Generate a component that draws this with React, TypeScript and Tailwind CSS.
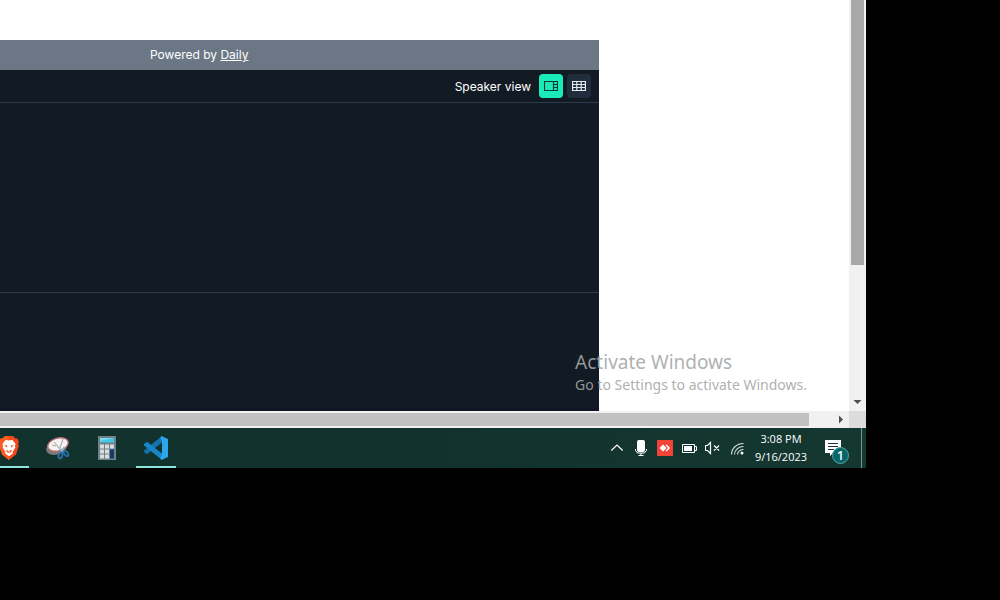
import type { ReactNode } from "react";

function SpeakerIcon() {
  return (
    <svg width="14" height="12" viewBox="0 0 14 12" fill="none" stroke="#0d3b37" aria-hidden="true">
      <path d="M.5 1.500h13v9H.5zM9.500 1.500v9M9.500 4.500h4M9.500 7.500h4" strokeWidth="1.200" />
    </svg>
  );
}

function GridIcon() {
  return (
    <svg width="14" height="12" viewBox="0 0 14 12" fill="none" stroke="#e4e9ef" aria-hidden="true">
      <path d="M.6 1.500h12.800v9H.6zM.5 4.500h13M.5 7.500h13M4.800 1.500v9M9.200 1.500v9" strokeWidth="1.200" />
    </svg>
  );
}

function CallPanel() {
  return (
    <section className="flex w-[599px] flex-col bg-[#121a24] text-white" aria-label="Video call">
      <p className="flex h-[30px] items-center bg-[#6b7785] pl-[150px] font-['Inter',sans-serif] text-xs">
        <span>
          Powered by{" "}
          <a href="#daily" className="underline">
            Daily
          </a>
        </span>
      </p>
      <div className="flex h-[33px] items-center justify-end gap-1 border-b border-[#2b3d4d] pr-2 font-['Inter',sans-serif] text-xs">
        <span className="mr-1 pt-px">Speaker view</span>
        <button type="button" aria-label="Speaker view" className="flex size-6 items-center justify-center rounded bg-[#1bebb9]">
          <SpeakerIcon />
        </button>
        <button type="button" aria-label="Grid view" className="flex size-6 items-center justify-center rounded bg-[#1f2d3d]">
          <GridIcon />
        </button>
      </div>
      <div className="h-[190px] border-b border-[#2b3d4d]" />
      <div className="flex-1 border-b-4 border-[#111722]" />
    </section>
  );
}

function VerticalScrollbar() {
  return (
    <div className="flex w-[17px] flex-col items-center justify-between bg-[#f1f1f1]">
      <div className="h-[265px] w-[13px] bg-[#a8a8a8]" />
      <svg width="17" height="17" viewBox="0 0 17 17" aria-hidden="true">
        <path d="M4.500 6h8l-4 4z" fill="#505050" />
      </svg>
    </div>
  );
}

function HorizontalScrollbar() {
  return (
    <div className="flex h-[17px] items-center bg-[#f1f1f1]">
      <div className="mr-[23px] h-[13px] flex-1 bg-[#c1c1c1]" />
      <svg width="17" height="17" viewBox="0 0 17 17" aria-hidden="true">
        <path d="M7 4.500v8l4-4z" fill="#505050" />
      </svg>
      <div className="h-[17px] w-[17px] bg-[#dcdcdc]" />
    </div>
  );
}

function TaskButton({ label, active, children }: { label: string; active?: boolean; children: ReactNode }) {
  return (
    <button
      type="button"
      aria-label={label}
      className={`flex h-10 w-10 shrink-0 items-center justify-center border-b-2 pt-0.5 ${active ? "border-[#8fe6dc]" : "border-transparent"}`}
    >
      {children}
    </button>
  );
}

function BraveIcon() {
  return (
    <svg width="20" height="24" viewBox="0 0 20 24" aria-hidden="true">
      <path d="M6 0h8l2.300 2.500 1.800-.3L20 6l-.8 2 .5 2-2.700 8.500L10 24l-7-5.500L.3 10l.5-2L0 6l1.900-3.800 1.800.3z" fill="#f4481c" />
      <path d="M10 0H6L3.700 2.500l-1.800-.3L0 6l.8 2-.5 2L3 18.500 10 24z" fill="#fb5a21" />
      <path d="M10 4.600l3.200-.9L16.600 8l-.7 2 .5 1.500-1.800 2.700-1.100 1.800.4 1.600L10 20.300l-3.900-2.700.4-1.600-1.100-1.800-1.800-2.700.5-1.500-.7-2 3.400-4.300z" fill="#fff" />
      <path d="M5.200 8.800l3.300 1-.8 1.700zM14.800 8.800l-3.300 1 .8 1.700z" fill="#ed4b1b" />
      <path d="M7 13.800l3 1.200 3-1.200-1 2.200-2 1.200L8 16z" fill="#ed4b1b" />
      <path d="M8.600 15.500h2.800L10 16.700z" fill="#fff" />
    </svg>
  );
}

function SnipIcon() {
  return (
    <svg width="26" height="26" viewBox="0 0 26 26" fill="none" aria-hidden="true">
      <ellipse cx="11.500" cy="13" rx="10.500" ry="6.600" transform="rotate(-16 11.500 13)" fill="#777c7c" />
      <ellipse cx="13" cy="9.500" rx="10.500" ry="6.300" transform="rotate(-16 13 9.500)" fill="#f6f3f3" stroke="#bf6d72" strokeWidth="1.300" />
      <path d="M9 7l6 7M18 4l-3 9M7 10l4 1" stroke="#aaa7aa" strokeWidth="1.100" />
      <path d="M14 13l4 4M19 12l-2 5" stroke="#8ab7d2" strokeWidth="1.500" />
      <ellipse cx="15.500" cy="20.500" rx="1.800" ry="3" transform="rotate(20 15.500 20.500)" stroke="#2870a8" strokeWidth="1.800" />
      <ellipse cx="21" cy="18.500" rx="1.700" ry="3" transform="rotate(-40 21 18.500)" stroke="#2870a8" strokeWidth="1.800" />
    </svg>
  );
}

function CalculatorIcon() {
  return (
    <svg width="18" height="24" viewBox="0 0 18 24" aria-hidden="true">
      <path d="M0 0h18v24H0z" fill="#718087" />
      <path d="M2 2h14v4.500H2z" fill="#45c5e8" />
      <path d="M2 2h14L2 5z" fill="#7bdcf1" />
      <path d="M2 8.500h4v4H2zM7 8.500h4v4H7zM12 8.500h4v4h-4zM2 13.500h4v4H2zM7 13.500h4v4H7zM2 18.500h4v4H2zM7 18.500h4v4H7z" fill="#d8dde0" />
      <path d="M12 13.500h4v9h-4z" fill="#173966" />
    </svg>
  );
}

function CodeIcon() {
  return (
    <svg width="24" height="24" viewBox="0 0 24 24" aria-hidden="true">
      <path d="M18 0v6.500L3 18.200 0 16v-1.500z" fill="#1471ae" />
      <path d="M0 8l3-2.200 15 11.700V24L0 9.500z" fill="#1785c8" />
      <path d="M17.500 0L24 3v18l-6.500 3-1-1.500L18 18V6l-1.500-4.500z" fill="#2ca5ed" />
    </svg>
  );
}

function TrayIcons() {
  return (
    <div className="flex items-center gap-2">
      <svg width="16" height="16" viewBox="0 0 16 16" fill="none" stroke="#fff" strokeWidth="1.200" aria-label="Show hidden icons" role="img">
        <path d="M2.300 10.500L8 5l5.700 5.500" />
      </svg>
      <svg width="16" height="18" viewBox="0 0 16 18" fill="none" stroke="#fff" aria-label="Microphone" role="img">
        <rect x="4.500" y="1.500" width="7" height="11" rx="1" fill="#fff" />
        <path d="M2.500 10v1.500l2 2.500h7l2-2.500V10M8 14v2.500M5.500 16.500h5" strokeWidth="1" />
      </svg>
      <svg width="16" height="16" viewBox="0 0 16 16" aria-label="AnyDesk" role="img">
        <path d="M0 0h16v16H0z" fill="#f04438" />
        <path d="M2.500 8L6 4.500 9.500 8 6 11.500z" fill="#fff" />
        <path d="M8.500 5.500l1-1L13.200 8l-3.700 3.500-1-1L11 8z" fill="#fff" />
      </svg>
      <svg width="16" height="16" viewBox="0 0 16 16" fill="none" stroke="#fff" aria-label="Battery" role="img">
        <path d="M1.500 4.500h12v8h-12zM13.500 6.500h2v4h-2" />
        <path d="M3 6h8v5H3z" fill="#fff" stroke="none" />
      </svg>
      <svg width="16" height="16" viewBox="0 0 16 16" fill="none" stroke="#fff" aria-label="Volume muted" role="img">
        <path d="M.5 5.500h2l3-3v11l-3-3h-2zM9 5.500l5 5M14 5.500l-5 5" strokeWidth="1.200" />
      </svg>
      <svg width="16" height="16" viewBox="0 0 16 16" fill="none" stroke="#d7e0df" strokeWidth="1.100" aria-label="Wireless network" role="img">
        <path d="M2.500 14.500C2.500 8.500 7.500 3.500 14.500 3.500M5.500 14.500c0-4.500 4-8 9-8M8.500 14.500c0-3 3-5 6-5" />
        <circle cx="13" cy="13" r="1.500" fill="#fff" stroke="none" />
      </svg>
    </div>
  );
}

function Taskbar() {
  return (
    <footer className="flex h-10 items-center justify-between overflow-hidden bg-linear-to-r from-[#12322d] via-[#12332d] to-[#143730] font-['Open_Sans',sans-serif] text-white">
      <nav className="-ml-[11px] flex gap-[9px]" aria-label="Open programs">
        <TaskButton label="Brave" active>
          <BraveIcon />
        </TaskButton>
        <TaskButton label="Snipping Tool">
          <SnipIcon />
        </TaskButton>
        <TaskButton label="Calculator">
          <CalculatorIcon />
        </TaskButton>
        <TaskButton label="Visual Studio Code" active>
          <CodeIcon />
        </TaskButton>
      </nav>
      <div className="flex h-full items-center">
        <TrayIcons />
        <div className="ml-2 w-14 text-center text-[11px] leading-[18px] font-medium">
          <div>3:08 PM</div>
          <div>9/16/2023</div>
        </div>
        <button type="button" aria-label="Notifications" className="relative ml-4 h-10 w-9">
          <svg width="18" height="18" viewBox="0 0 18 18" aria-hidden="true">
            <path d="M0 1h16v13H8l-3 3v-3H0z" fill="#fff" />
            <path d="M3 4.500h10M3 7.500h10M3 10.500h6" stroke="#17352f" strokeWidth="1.200" />
          </svg>
          <span className="absolute top-[19px] left-[7px] flex size-[17px] items-center justify-center rounded-full border border-[#59a3a3] bg-[#086669] text-xs leading-none font-semibold">
            1
          </span>
        </button>
        <div className="h-full w-[5px] border-l border-[#7d9591]" />
      </div>
    </footer>
  );
}

export default function App() {
  return (
    <div className="min-h-screen bg-black pr-[134px]">
      <main className="flex h-[411px] bg-white">
        <div className="relative flex flex-1 pt-10">
          <CallPanel />
          <aside className="absolute right-[42px] bottom-4 font-['Noto_Sans',sans-serif] whitespace-nowrap text-[#a6a6a6]/90">
            <p className="text-[19px] leading-[26px]">Activate Windows</p>
            <p className="text-sm leading-5">Go to Settings to activate Windows.</p>
          </aside>
        </div>
        <VerticalScrollbar />
      </main>
      <HorizontalScrollbar />
      <Taskbar />
    </div>
  );
}
